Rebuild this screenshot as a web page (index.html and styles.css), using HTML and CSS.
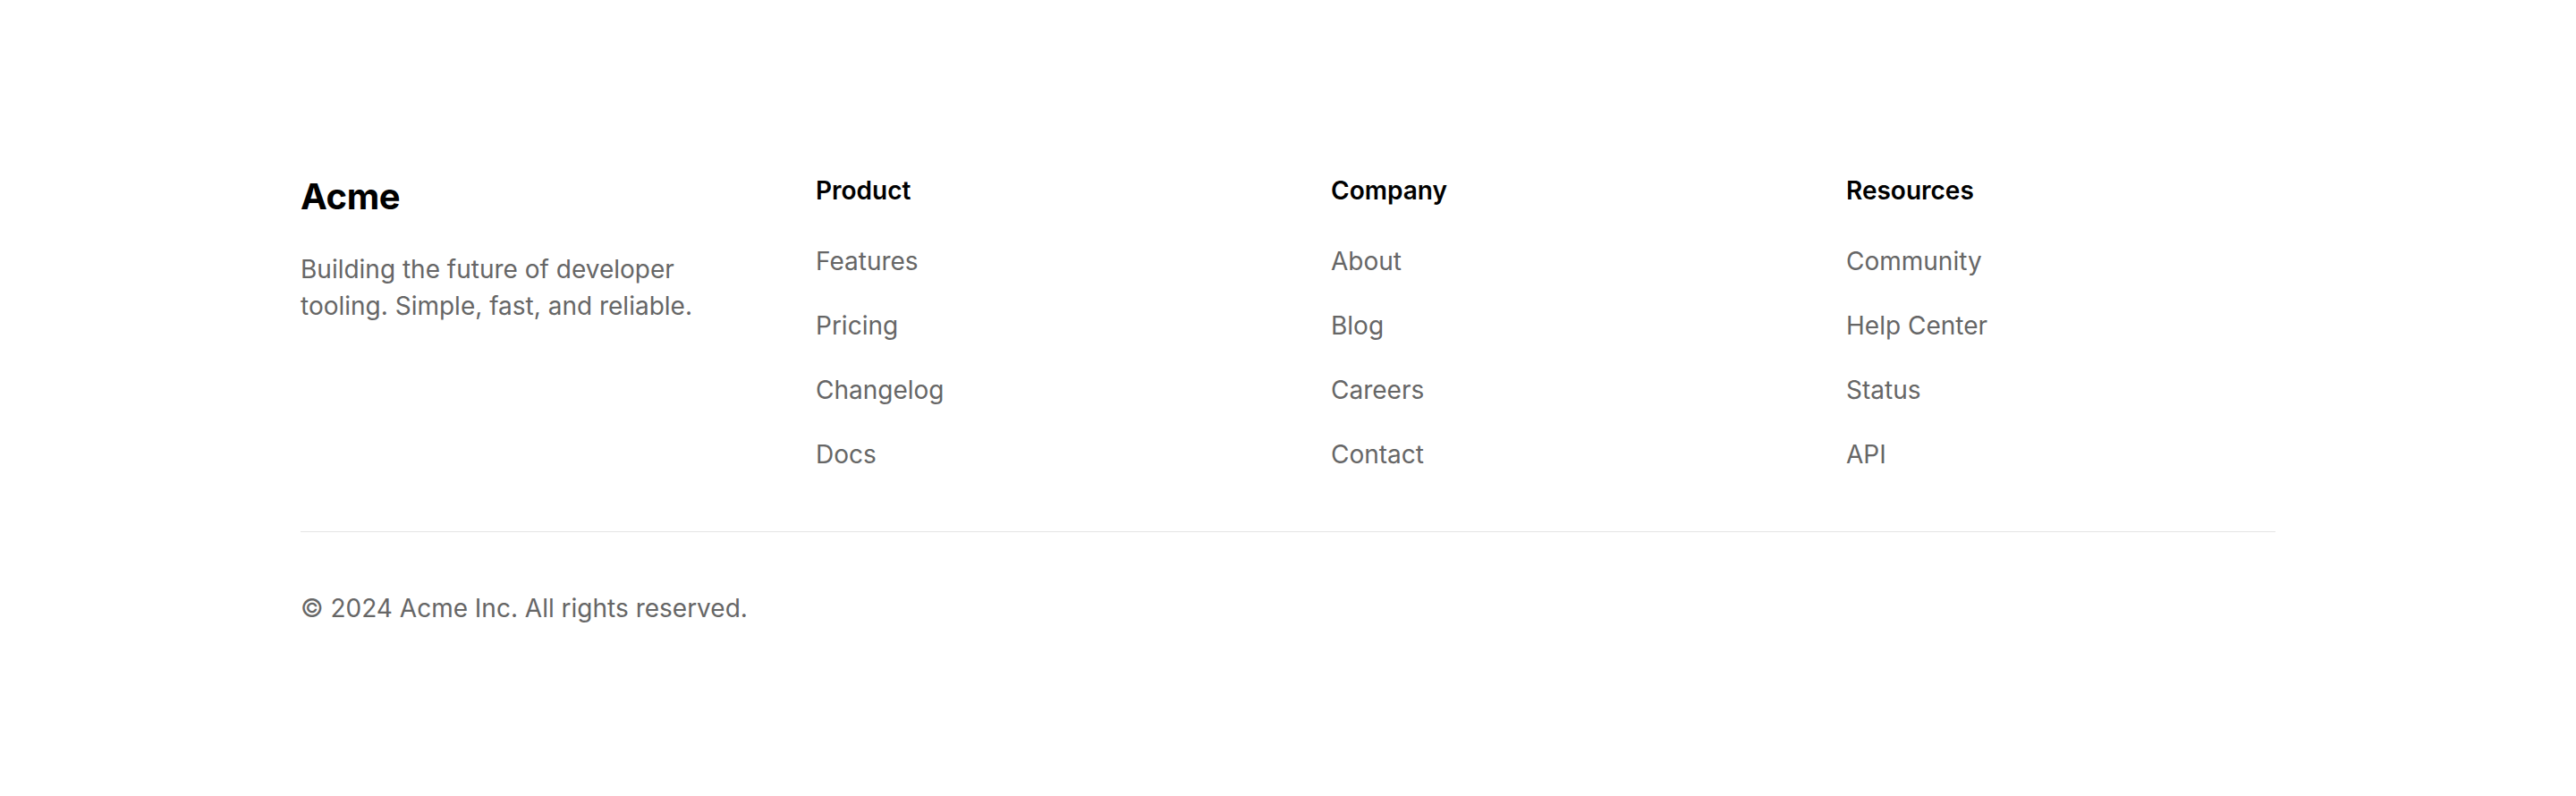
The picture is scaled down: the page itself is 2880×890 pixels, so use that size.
FILE: index.html
```html
<!DOCTYPE html>
<html lang="en">
<head>
<meta charset="utf-8">
<title>Footer</title>
<link rel="stylesheet" href="styles.css">
</head>
<body>
<footer class="footer">
  <div class="footer-inner">
    <div class="footer-grid">
      <div class="brand">
        <div class="brand-name">Acme</div>
        <p class="brand-desc">Building the future of developer tooling. Simple, fast, and reliable.</p>
      </div>
      <nav class="col">
        <h4 class="col-title">Product</h4>
        <ul class="links">
          <li><a href="#">Features</a></li>
          <li><a href="#">Pricing</a></li>
          <li><a href="#">Changelog</a></li>
          <li><a href="#">Docs</a></li>
        </ul>
      </nav>
      <nav class="col">
        <h4 class="col-title">Company</h4>
        <ul class="links">
          <li><a href="#">About</a></li>
          <li><a href="#">Blog</a></li>
          <li><a href="#">Careers</a></li>
          <li><a href="#">Contact</a></li>
        </ul>
      </nav>
      <nav class="col">
        <h4 class="col-title">Resources</h4>
        <ul class="links">
          <li><a href="#">Community</a></li>
          <li><a href="#">Help Center</a></li>
          <li><a href="#">Status</a></li>
          <li><a href="#">API</a></li>
        </ul>
      </nav>
    </div>
    <div class="footer-bottom">
      <p class="copy">© 2024 Acme Inc. All rights reserved.</p>
    </div>
  </div>
</footer>
</body>
</html>
```
FILE: styles.css
```css
* { box-sizing: border-box; }
html, body {
  margin: 0;
  padding: 0;
  background: #ffffff;
}
body {
  font-family: Inter, "Noto Sans", "Liberation Sans", sans-serif;
  color: #0a0a0a;
}
.footer {
  padding: 193px 336px 0;
}
.footer-inner {
  width: 100%;
}
.footer-grid {
  display: grid;
  grid-template-columns: repeat(4, 1fr);
  column-gap: 96px;
  padding-bottom: 66px;
  border-bottom: 1px solid #e5e5e5;
}
.brand-name {
  font-size: 40px;
  font-weight: 700;
  line-height: 54px;
  color: #000;
  letter-spacing: -0.4px;
}
.brand-desc {
  margin: 34px 0 0;
  font-size: 28px;
  line-height: 41px;
  color: #666666;
  max-width: 480px;
}
.col-title {
  margin: 0 0 39px;
  font-size: 28px;
  font-weight: 600;
  line-height: 40px;
  color: #000;
}
.links {
  list-style: none;
  margin: 0;
  padding: 0;
  display: flex;
  flex-direction: column;
  gap: 32px;
}
.links li {
  font-size: 28px;
  line-height: 40px;
}
.links a {
  color: #666666;
  text-decoration: none;
}
.footer-bottom {
  padding-top: 65px;
}
.copy {
  margin: 0;
  font-size: 28px;
  line-height: 40px;
  color: #666666;
}
```
